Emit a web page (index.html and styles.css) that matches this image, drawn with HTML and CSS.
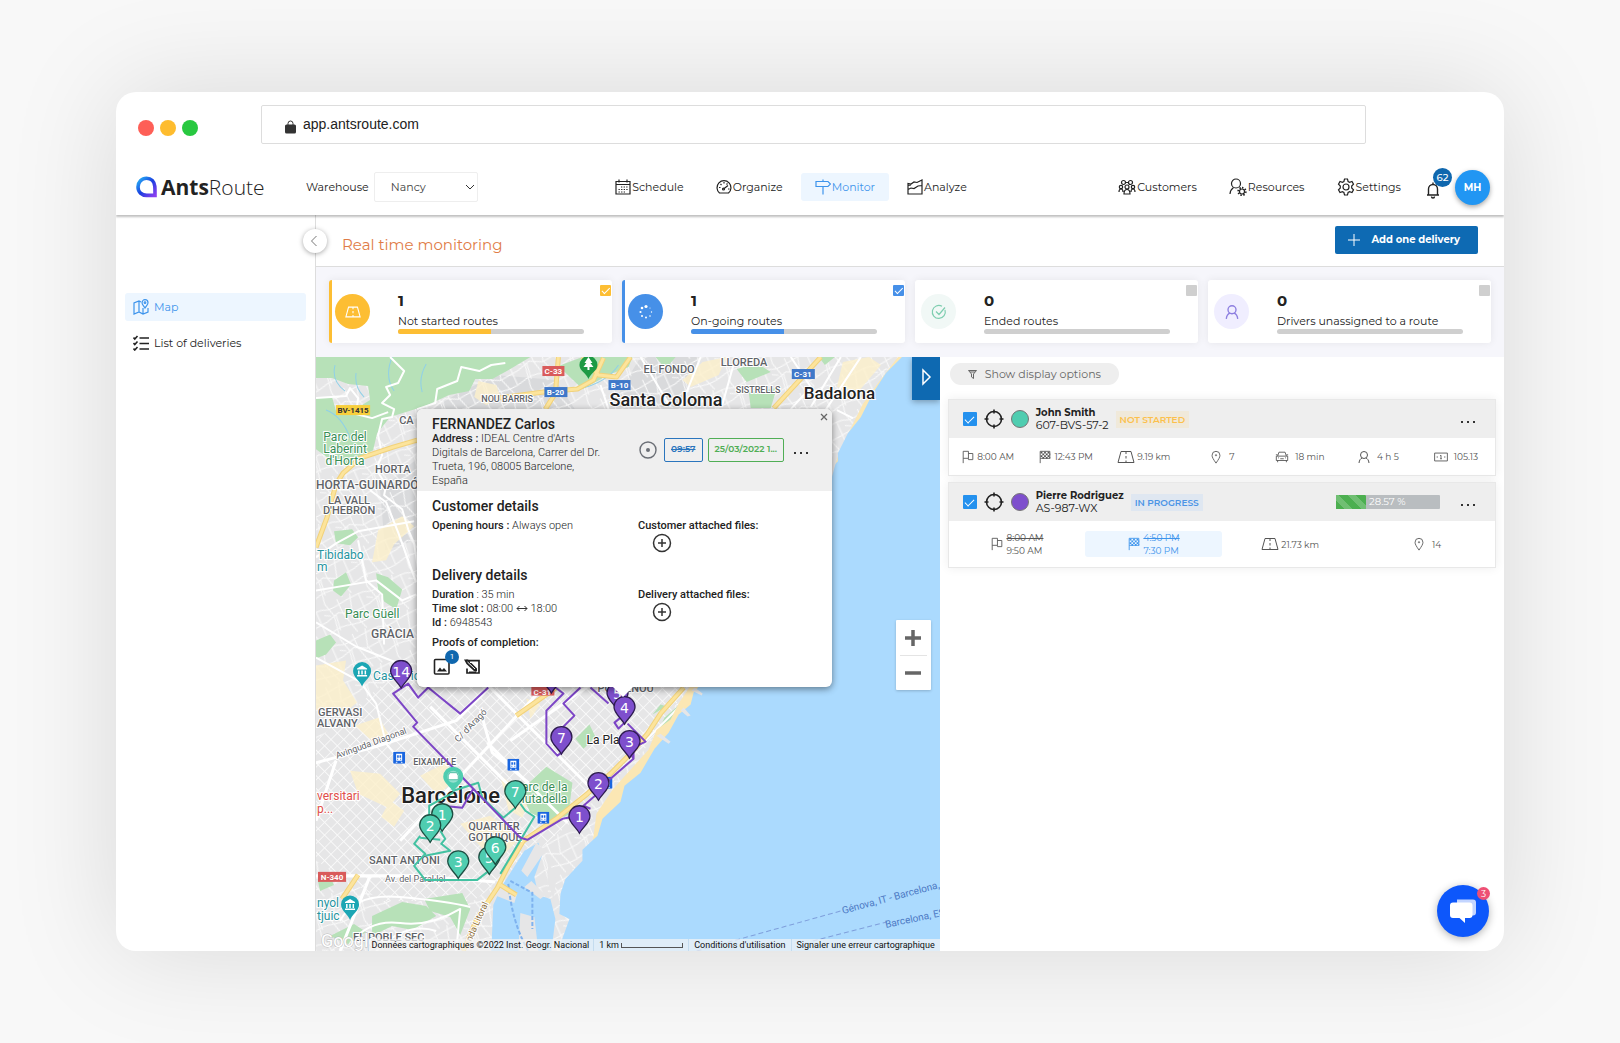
FILE: index.html
```html
<!DOCTYPE html>
<html lang="en">
<head>
  <meta charset="UTF-8">
  <meta name="viewport" content="width=device-width, initial-scale=1.0">
  <title>AntsRoute - Real time monitoring</title>
  <link rel="stylesheet" href="styles.css">
</head>
<body>

  <!-- Icons used more than once -->
  <svg class="sprite" aria-hidden="true">
    <symbol id="road" viewBox="0 0 18 14"><path d="M4 1.500h10l3 11H1zM9 1.500v2.500M9 6v2.500M9 10.500v2" /></symbol>
    <symbol id="flag" viewBox="0 0 14 16"><path d="M1.500 15V1.500h6v8h-6M7.500 4h5v7H7.500V9.500" /></symbol>
    <symbol id="finish" viewBox="0 0 14 16"><path d="M1.500 15V1.500h11v8h-11" /><path stroke-dasharray="2 2" stroke-width="2" d="M2 3h10M4 5h9M2 7h10M4 9h9" /></symbol>
    <symbol id="pin" viewBox="0 0 12 16"><path d="M6 15C3 10.500 1.500 8.500 1.500 6a4.500 4.500 0 0 1 9 0c0 2.500-1.500 4.500-4.500 9z" /><circle cx="6" cy="6" r=".7" /></symbol>
    <symbol id="person" viewBox="0 0 14 14"><circle cx="7" cy="5" r="3.500" /><path d="M2 13c.3-3 1.600-4.500 3.200-5M12 13c-.3-3-1.600-4.500-3.200-5" /></symbol>
    <symbol id="target" viewBox="0 0 20 20"><circle cx="10" cy="10" r="7.500" /><path d="M10 .5v4M10 15.500v4M.5 10h4M15.500 10h4" /></symbol>
    <symbol id="plus-circle" viewBox="0 0 20 20"><circle cx="10" cy="10" r="8.500" /><path d="M10 6v8M6 10h8" /></symbol>
    <symbol id="dots" viewBox="0 0 14 4"><path d="M0 1h2v2H0zM6 1h2v2H6zM12 1h2v2h-2z" /></symbol>
    <symbol id="marker" viewBox="0 0 24 30"><path d="M12 28.500C8.500 22 1.500 18 1.500 11.500a10.500 10.500 0 0 1 21 0C22.500 18 15.500 22 12 28.500z" /></symbol>
    <symbol id="train" viewBox="0 0 12 12"><rect width="12" height="12" rx="1" fill="#1a66e0" /><path fill="#fff" d="M3 2h6v7H3zM3 10h1.500L4 11H2.500zM9 10H7.500l.5 1h1.500z" /><path fill="#1a66e0" d="M4 3.500h1.600V6H4zM6.400 3.500H8V6H6.400zM4 7h1v1H4zM7 7h1v1H7z" /></symbol>
    <symbol id="museum" viewBox="0 0 20 26"><path fill="#1ba6b4" d="M10 25C8 19 1 16 1 9.500a9 9 0 0 1 18 0C19 16 12 19 10 25z" /><path fill="#fff" d="M10 4l5 3v1H5V7zM6 9h1.500v4H6zM9.200 9h1.500v4H9.200zM12.500 9H14v4h-1.500zM5 13.500h10V15H5z" /></symbol>
  </svg>

  <div class="window">
    <div class="browser-bar">
      <div class="lights"><span class="red"></span><span class="yellow"></span><span class="green"></span></div>
      <div class="url">
        <svg width="11" height="14" viewBox="0 0 11 14"><path d="M3 5V3.500a2.500 2.500 0 0 1 5 0V5" fill="none" stroke="#333" /><rect y="4.500" width="11" height="9" rx="1.500" fill="#333" /></svg>
        <span>app.antsroute.com</span>
      </div>
    </div>

    <header class="navbar">
      <div class="nav-left">
        <a class="logo" href="#">
          <svg width="22" height="22" viewBox="0 0 22 22">
            <defs><linearGradient id="logoFill" x1="0" y1="0" x2="1" y2="1"><stop offset="0" stop-color="#29b6f6" /><stop offset=".5" stop-color="#1a3fe0" /><stop offset="1" stop-color="#8a3ff0" /></linearGradient></defs>
            <path d="M10.500 2.200c4.800 0 7.800 3.300 8.300 8 .3 3 .2 6 .2 9.200h-8.300C5.700 19.400 2 16 2 11s3.700-8.800 8.500-8.800z" fill="none" stroke="url(#logoFill)" stroke-width="3.600" />
          </svg>
          <span><b>Ants</b>Route</span>
        </a>
        <label for="warehouse">Warehouse</label>
        <div class="select-box">
          <select id="warehouse"><option>Nancy</option></select>
          <svg width="10" height="6" viewBox="0 0 10 6"><path d="M1 1l4 4 4-4" /></svg>
        </div>
      </div>

      <nav class="nav-items">
        <a href="#">
          <svg class="icon" viewBox="0 0 16 16"><path d="M1 2.500h14V15H1zM1 5.500h14M4 .5v3M12 .5v3" /><path stroke-dasharray="1.300 1.300" d="M6 8h7M3.500 10.500H13M3.500 13H10" /></svg>
          Schedule
        </a>
        <a href="#">
          <svg class="icon" viewBox="0 0 16 16"><path d="M3.500 14A7 7 0 1 1 12.500 14zM7.500 10l4.500-3.500" /><circle cx="7.500" cy="10" r="1" /><path d="M8 3v1.500M3 8.500h1.500M4.500 5l1 1M11.500 4.500l-1 1M12 10h1.500" /></svg>
          Organize
        </a>
        <a href="#" class="active">
          <svg class="icon" viewBox="0 0 16 16"><path d="M1 2.500h12L15.500 5 13 7.500H1zM8 .5v2M8 7.500V15.500" /></svg>
          Monitor
        </a>
        <a href="#">
          <svg class="icon" viewBox="0 0 16 16"><path d="M1 15V4.500l3 .5 3-2 3 .5 5-2.500v14zM1 10.500l3-1.500 3 .5 4-2.500 4-.5M1 6.500l3-.5" /></svg>
          Analyze
        </a>
      </nav>

      <nav class="nav-items nav-right">
        <a href="#">
          <svg class="icon wide" viewBox="0 0 18 16"><circle cx="5.500" cy="3.500" r="2" /><circle cx="12.500" cy="3.500" r="2" /><circle cx="3" cy="8" r="1.700" /><circle cx="9" cy="8" r="2" /><circle cx="15" cy="8" r="1.700" /><path d="M1 13c0-2 .7-3 2-3s2 1 2 3M6 15c0-3 1-4.500 3-4.500s3 1.500 3 4.500zM13 13c0-2 .7-3 2-3s2 1 2 3M7.500 3.500h3" /></svg>
          Customers
        </a>
        <a href="#">
          <svg class="icon wide" viewBox="0 0 18 18"><circle cx="7" cy="5.500" r="4.500" /><path d="M1 16c.2-3 1.500-5 3.500-6.500" /><circle cx="13" cy="13.500" r="2.500" /><path stroke-width="1.800" stroke-dasharray="1.400 1.550" d="M13 9.700a3.800 3.800 0 1 1 0 7.600 3.800 3.800 0 1 1 0-7.600" /></svg>
          Resources
        </a>
        <a href="#">
          <svg class="icon wide" viewBox="0 0 18 18"><circle cx="9" cy="9" r="3" /><path d="M7.500 1h3l.6 2.500 1.500.8 2.400-.8 1.500 2.600-1.800 1.900v2l1.800 1.900-1.500 2.600-2.400-.8-1.500.8-.6 2.500h-3l-.6-2.500-1.500-.8-2.400.8-1.500-2.600L3.300 10V8L1.500 6.100 3 3.500l2.400.8 1.500-.8z" /></svg>
          Settings
        </a>
        <button class="bell" aria-label="Notifications">
          <svg width="14" height="18" viewBox="0 0 14 18"><path d="M1 14h12M2.500 14V8a4.500 4.500 0 0 1 9 0v6M5.500 15.500a1.500 1.500 0 0 0 3 0M7 1.500v2" /></svg>
          <span class="badge">62</span>
        </button>
        <button class="avatar">MH</button>
      </nav>
    </header>

    <div class="app">
      <aside class="sidebar">
        <button class="collapse" aria-label="Collapse menu"><svg width="8" height="12" viewBox="0 0 8 12"><path d="M6.500 1l-5 5 5 5" /></svg></button>
        <a href="#" class="active">
          <svg class="icon" viewBox="0 0 16 16"><path d="M8 3L6 2 1 4v11l5-2 4 2 5-2V9M6 2v11M10 9v6" /><path d="M12 9C10.500 6.500 9 5.500 9 3.700a3 3 0 0 1 6 0C15 5.500 13.500 6.500 12 9z" /><circle cx="12" cy="3.700" r=".8" /></svg>
          Map
        </a>
        <a href="#">
          <svg class="icon" viewBox="0 0 16 16"><path stroke-width="1.600" d="M6.500 3H16M6.500 8.500H16M6.500 14H16M.5 2.500l1.300 1.500L4.500 1M.5 8l1.300 1.500 2.700-3M.5 13.500L1.800 15l2.700-3" /></svg>
          List of deliveries
        </a>
      </aside>

      <main class="content">
        <div class="title-bar">
          <h1>Real time monitoring</h1>
          <button class="add-btn"><svg width="14" height="14" viewBox="0 0 14 14"><path d="M7 1v12M1 7h12" /></svg>Add one delivery</button>
        </div>

        <section class="stats">
          <div class="stat not-started">
            <span class="circle"><svg class="icon"><use href="#road" /></svg></span>
            <div class="info"><strong>1</strong><label for="s1">Not started routes</label><div class="bar"><div style="width: 50%"></div></div></div>
            <input type="checkbox" id="s1" checked>
          </div>
          <div class="stat on-going">
            <span class="circle"><svg class="icon" viewBox="0 0 16 16"><g fill="#fff" stroke="none"><circle cx="8" cy="2.500" r="1.600" /><circle cx="4" cy="4" r="1.300" /><circle cx="2.500" cy="8" r="1.100" /><circle cx="4" cy="12" r="1" /><circle cx="8" cy="13.500" r="1" /><circle cx="12" cy="12" r=".8" /><circle cx="13.500" cy="8" r=".7" /><circle cx="12" cy="4" r=".5" /></g></svg></span>
            <div class="info"><strong>1</strong><label for="s2">On-going routes</label><div class="bar"><div style="width: 50%"></div></div></div>
            <input type="checkbox" id="s2" checked>
          </div>
          <div class="stat ended">
            <span class="circle"><svg class="icon" viewBox="0 0 16 16"><path d="M14 6a6.500 6.500 0 1 1-3-3.700M5 7.500l3 3 6-7" /></svg></span>
            <div class="info"><strong>0</strong><label for="s3">Ended routes</label><div class="bar"></div></div>
            <input type="checkbox" id="s3">
          </div>
          <div class="stat unassigned">
            <span class="circle"><svg class="icon"><use href="#person" /></svg></span>
            <div class="info"><strong>0</strong><label for="s4">Drivers unassigned to a route</label><div class="bar"></div></div>
            <input type="checkbox" id="s4">
          </div>
        </section>

        <div class="board">
          <section class="map">
            <svg class="map-canvas" viewBox="316 357 624 593" preserveAspectRatio="xMinYMin slice">
              <defs>
                <pattern id="blocks" width="9" height="9" patternUnits="userSpaceOnUse" patternTransform="rotate(45)"><path d="M0 0h9M0 0v9" stroke="#fafafa" stroke-width="1.600" /></pattern>
                <pattern id="suburb" width="46" height="38" patternUnits="userSpaceOnUse" patternTransform="rotate(-24)"><path d="M0 4c12 6 20-2 46 0M0 17l14-4 12 6 20-2M0 29c16-6 26 6 46 0M5 0l4 14-4 24M18 0v15l6 23M32 0l-5 18 7 20M40 3v27M11 14l-2 16M0 10l6 3" fill="none" stroke="#fafafa" stroke-width="1" /></pattern>
              </defs>

              <rect x="316" y="357" width="660" height="640" fill="#e6e6e7" />
              <path fill="#d9dadc" d="M455 395l40-20 60 5 20 30H430zM640 357h60l-20 50h-70zM380 490l35-30v80l-30 10z" />
              <rect x="316" y="357" width="660" height="640" fill="url(#suburb)" />
              <path fill="#e6e6e7" d="M316 740l77-65 90-25h230l-70 100-70 70-60 50-40 30h-90l-67-40z" />
              <path fill="url(#blocks)" d="M316 740l77-65 90-25h230l-70 100-70 70-60 50-40 30h-90l-67-40z" />

              <!-- Built-up areas -->
              <path fill="#fdf0cb" fill-opacity=".8" d="M478 381l18 4 4 12-14 8-12-8zM378 530l24-14 12 10-20 18-8 16-14 2zM682 380l20-18 24-5-8 18-28 12zM842 362l26-5 12 8-22 26-22-4zM316 665l30-5-3 20 14 22-15 12-26-5zM355 725l24-8 9 16-14 9zM350 770l30 3 20 20-12 14-30-14zM420 775l24-12 14 12-20 20zM500 775l30 20-8 22-14-8zM526 698l14 6-10 14zM460 823l30-8 30 22-25 25-20-22zM390 800l14 10-10 16-13-10z" />

              <!-- Parks -->
              <g fill="#b7e1b8">
                <path d="M316 357h214l-20 12-18 10-17 0-6 12-20 4-24 11-35 11-13 16-4 17-15 7-12 6-16-4-14-10v-52l16 0 4 14 12-6 6 5 16-10-2-14-20-2-16-6h-16z" />
                <path d="M334 531l18-2 6 8-8 8-14-2zM334 580l12-8 5 12-10 12-8-6zM376 573l12 4 14 12-6 20-12-8-6-12zM316 640l14-6 6 8-10 12-10 4zM558 366l24-9h50l-4 10-20 8-26 14zM655 357h20l-10 12zM736 369l20-6 14 9-24 10zM748 392l28-4-6 20h-20zM818 357h16l-10 8zM520 790l26-24 26 16-4 32-16 8-22-10zM575 738l14-14 6 12-12 12zM664 717l14-12-4 20-22 18zM652 714l8-10 6 2z" />
                <path d="M372 915l30-14 24 4 10 10-24 14-20-4-20 10zM424 898l38-6 8 16-10 26-10-18-20-6zM318 880l12-4 4 8-14 6zM330 935l24-12 12 8-18 12zM530 888l8 4-2 6z" />
              </g>
              <path d="M335 365q-4 16 10 26M392 357q-8 20 2 34M326 410q16 6 24 28M426 364q-8 14-4 28M364 397q-10-10-8-24M618 365q-12 18-40 24" fill="none" stroke="#8fd0e8" stroke-width="1" />

              <!-- Streets -->
              <g fill="none" stroke="#fff" stroke-width="2" stroke-linejoin="round">
                <path d="M390 357l14 14-6 12-12 4 4 8-8 8 12 6-2 8-10 2-4 16 4 20-6 14 10 16-2 10 18 14 6 20 6 14 6 40M316 398l30-2 4-8 8 10-2 16 16 4 16-6M417 409l18-6 2-14 20-8 4-14 18 4 12-6 14-2" />
                <path d="M316 557l20-14 22-12 56-10M316 622l40 24 40 16 30 26M316 657l44 24 16 22 10 40 20 24M316 590l60-10 26 20 14-6M370 490l16 12 12 30 18 50M358 540l8 40 16 14 2 50" />
                <path d="M316 762l60-16 80-26 60-60M336 760l-20 60M400 840l140-150M430 706l96 96M480 710l12 42 36 30M487 742l80 80M316 875h100l80 6M340 950l20-50 10-25M490 687l100 100M510 740l80-56" stroke-width="3" />
                <path d="M340 920q14-28 60-24t70 10M350 942q20-24 50-20t60-14l-4 42M376 950q30-30 60-20M640 357l30 50M700 357l-20 50M735 357l-14 50M790 357l20 30-20 22M840 357l-30 50M600 385l8 24M860 357l-40 60M836 410l16 8" />
                <path d="M590 687l44-34M640 745l58-58" />
              </g>

              <!-- Sea -->
              <path fill="#fbe7b4" d="M940 357h-43l-19 25-16 22-20 40-8 20-30 60-110 155-16 24-8 16-14 10-8 20-36 40-16 24-4 30-10 30z" />
              <path fill="#abdafe" d="M940 357h-39l-16 16-13 20-12 24-13 16-10 20v8l-5 5-40 80-92 138-7 8-3 12-12 10-10 18-14 16-14 24-16 13-4 16-18 17-5 17-15 14v11l-17 18-5 15-1 20 10 5-9 25v42h385z" />
              <path fill="#abdafe" d="M524 850l14-8 4 12-8 22 4 18 12 4 5 20-4 32h-60l2-46 8-18z" />
              <path fill="#e6e6e7" d="M495 880l22 12-3 10-20-8zM536 842l-15 28 6 6 18-26zM524 886l16 12 5-4-14-14zM520 912l14 4 4 34h-20zM548 860l8 18-3 20-6-18zM694 687l8 6-1 2-10-5zM683 707l7 8-3 1-7-6zM660 733l10 8-2 2-12-8zM837 455l-6 22h-2l3-24z" />
              <path d="M508 883q4 40 20 67M510 880l22 12 0 36" fill="none" stroke="#7eb2ef" stroke-width="2" stroke-dasharray="4 2" />
              <path d="M696 950l144-40M812 940l74-19" stroke="#7f9fdc" stroke-width="1" stroke-dasharray="5 3" />

              <!-- Main roads -->
              <g fill="none" stroke="#f2d27a" stroke-width="5" stroke-linejoin="round">
                <path d="M316 547l11-30 9-33 7-11 17-15 33-11 24-7M558 357l-3 36-10 16M497 398l46-6 34-3 16-9 10-22M582 357l16 18 18 2 14-20M820 357l-47 51M683 687l-23 26-13 20-17 20-20 20-23 20-30 24-34 23-16 27-10 20-20 30-14 33" />
                <path d="M556 687l-40 28M342 898l16-24M500 884l16 10" />
              </g>
              <g fill="none" stroke="#fce49c" stroke-width="3" stroke-linejoin="round">
                <path d="M316 547l11-30 9-33 7-11 17-15 33-11 24-7M558 357l-3 36-10 16M497 398l46-6 34-3 16-9 10-22M582 357l16 18 18 2 14-20M820 357l-47 51M683 687l-23 26-13 20-17 20-20 20-23 20-30 24-34 23-16 27-10 20-20 30-14 33" />
                <path d="M556 687l-40 28M342 898l16-24M500 884l16 10" />
              </g>

              <!-- Place names -->
              <g class="place">
                <text x="481" y="402" class="s">NOU BARRIS</text>
                <text x="643" y="373">EL FONDO</text>
                <text x="720" y="366">LLOREDA</text>
                <text x="735" y="393" class="s">SISTRELLS</text>
                <text x="399" y="424">CA</text>
                <text x="375" y="473">HORTA</text>
                <text x="316" y="489" class="m">HORTA-GUINARDÓ</text>
                <text x="349" y="504" text-anchor="middle">LA VALL</text>
                <text x="349" y="514" text-anchor="middle">D'HEBRON</text>
                <text x="371" y="638" class="m">GRÀCIA</text>
                <text x="318" y="715">GERVASI</text>
                <text x="317" y="726">ALVANY</text>
                <text x="413" y="764" class="s">EIXAMPLE</text>
                <text x="468" y="829">QUARTIER</text>
                <text x="468" y="840">GOTHIQUE</text>
                <text x="369" y="863">SANT ANTONI</text>
                <text x="353" y="940">EL POBLE SEC</text>
                <text x="597" y="691">POBLENOU</text>
                <text x="385" y="881" class="street">Av. del Paral·lel</text>
                <text x="0" y="0" class="street" transform="translate(337 758) rotate(-20)">Avinguda Diagonal</text>
                <text x="0" y="0" class="street" transform="translate(458 742) rotate(-46)">C/ d'Aragó</text>
                <text x="0" y="0" class="street road-name" transform="translate(471 941) rotate(-66)">nda Litoral</text>
              </g>
              <g class="city">
                <text x="609" y="406">Santa Coloma</text>
                <text x="803" y="399" class="c2">Badalona</text>
                <text x="401" y="802" class="c1">Barcelone</text>
                <text x="586" y="743" class="c3">La Plata</text>
              </g>
              <g class="poi-park">
                <text x="345" y="441" text-anchor="middle">Parc del</text>
                <text x="345" y="453" text-anchor="middle">Laberint</text>
                <text x="345" y="465" text-anchor="middle">d'Horta</text>
                <text x="345" y="618">Parc Güell</text>
                <text x="567" y="790" text-anchor="end">Parc de la</text>
                <text x="567" y="802" text-anchor="end">Ciutadella</text>
              </g>
              <g class="poi-sight">
                <text x="317" y="559">Tibidabo</text>
                <text x="317" y="571">m</text>
                <text x="373" y="679">Casa Vic</text>
                <text x="317" y="906">nyol</text>
                <text x="317" y="919">tjuic</text>
              </g>
              <g class="poi-hospital">
                <text x="317" y="799">versitari</text>
                <text x="317" y="812">p...</text>
              </g>
              <g class="ferry">
                <text x="0" y="0" transform="translate(842 913) rotate(-15)">Génova, IT - Barcelona, ES</text>
                <text x="0" y="0" transform="translate(885 927) rotate(-12)">Barcelona, ES</text>
              </g>
              <g class="shield">
                <rect x="542" y="366" width="22" height="10" fill="#d95b5b" /><text x="553" y="374">C-33</text>
                <rect x="544" y="387" width="23" height="10" fill="#3f78c9" /><text x="555" y="395">B-20</text>
                <rect x="608" y="380" width="22" height="10" fill="#3f78c9" /><text x="619" y="388">B-10</text>
                <rect x="791" y="369" width="23" height="10" fill="#3f78c9" /><text x="802" y="377">C-31</text>
                <rect x="531" y="686" width="23" height="9" fill="#d95b5b" /><text x="542" y="694">C-31</text>
                <rect x="318" y="871" width="28" height="10" fill="#d95b5b" /><text x="332" y="879">N-340</text>
                <rect x="336" y="405" width="34" height="10" fill="#f8cf3c" /><text x="353" y="413" class="dark">BV-1415</text>
              </g>

              <use href="#train" x="393" y="751" width="12" height="12" />
              <use href="#train" x="507" y="758" width="12" height="12" />
              <use href="#train" x="537" y="811" width="12" height="12" />
              <use href="#train" x="600" y="776" width="12" height="12" />
              <use href="#museum" x="352" y="661" width="20" height="26" />
              <use href="#museum" x="340" y="894" width="20" height="26" />
              <path fill="#1e9a45" d="M588 379c-2-6-9-8-9-14a9 9 0 0 1 18 0c0 6-7 8-9 14z" />
              <path fill="#fff" d="M588 357l4 6h-2l3 4h-4v3h-2v-3h-4l3-4h-2z" />

              <!-- Routes -->
              <g fill="none" stroke-width="2" stroke-linejoin="round">
                <path class="route-green" d="M453 790l25-8 4 15 21 20 12-10M453 792l-24 13v12M520 803l5 7 9 6-34 57M495 865l-18 14h-52l-11-14 11-12-11-10 6-8M440 830l5 8-4 5 9 7-25 5M420 837l20 2" />
                <path class="route-purple" d="M579 815l-17 3-35 21-7-2-47-49-20-21-40-41 4-4-24-29 15-10 10 14 10-10 32 26 28-26M473 788l-11 19-20-2M555 687l8 6-17 17v33l11 12 4-3M561 728l13-13-11-12 17-16M590 687l18 16M630 753l3 5-23 20-12 14-15 13 7 3M579 823l4-18M624 722l-6 6-4-6 6-5M627 723l18 18-12 6 0 11" />
              </g>
              <g class="markers">
                <use href="#marker" class="purple" x="389" y="659" width="24" height="30" /><text x="401" y="676">14</text>
                <use href="#marker" class="purple" x="539" y="664" width="24" height="30" />
                <use href="#marker" class="purple" x="549" y="725" width="24" height="30" /><text x="561" y="742">7</text>
                <use href="#marker" class="purple" x="605" y="681" width="24" height="30" /><text x="617" y="698">5</text>
                <use href="#marker" class="purple" x="612" y="695" width="24" height="30" /><text x="624" y="712">4</text>
                <use href="#marker" class="purple" x="617" y="729" width="24" height="30" /><text x="629" y="746">3</text>
                <use href="#marker" class="purple" x="586" y="771" width="24" height="30" /><text x="598" y="788">2</text>
                <use href="#marker" class="purple" x="567" y="804" width="24" height="30" /><text x="579" y="821">1</text>
                <use href="#marker" class="green" x="503" y="779" width="24" height="30" /><text x="515" y="796">7</text>
                <use href="#marker" class="green" x="430" y="802" width="24" height="30" /><text x="442" y="819">1</text>
                <use href="#marker" class="green" x="418" y="813" width="24" height="30" /><text x="430" y="830">2</text>
                <use href="#marker" class="green" x="446" y="849" width="24" height="30" /><text x="458" y="866">3</text>
                <use href="#marker" class="green" x="477" y="845" width="24" height="30" /><text x="489" y="862">5</text>
                <use href="#marker" class="green" x="483" y="835" width="24" height="30" /><text x="495" y="852">6</text>
                <path fill="#4fcdb0" d="M453 792c-2-6-10-10-10-16a10 10 0 0 1 20 0c0 6-8 10-10 16z" />
                <circle cx="453" cy="776" r="6" fill="#fff" fill-opacity=".4" />
                <path fill="#fff" stroke="#3bb397" stroke-width=".8" d="M448 775l1.500-3h7l1.500 3v4h-10z" />
              </g>
              <text x="321" y="946" class="google">Google</text>
            </svg>

            <article class="popup">
              <button class="close" aria-label="Close"><svg width="8" height="8" viewBox="0 0 8 8"><path d="M1 1l6 6M7 1L1 7" /></svg></button>
              <header>
                <div class="who">
                  <h2>FERNANDEZ Carlos</h2>
                  <p><b>Address :</b> IDEAL Centre d'Arts Digitals de Barcelona, Carrer del Dr. Trueta, 196, 08005 Barcelone, España</p>
                </div>
                <div class="when">
                  <svg width="18" height="18" viewBox="0 0 18 18"><circle cx="9" cy="9" r="8" fill="none" stroke="#6b6f76" stroke-width="1.400" /><circle cx="9" cy="9" r="2" fill="#6b6f76" /></svg>
                  <span class="time"><s>09:57</s></span>
                  <span class="date">25/03/2022 1...</span>
                  <button class="more" aria-label="More"><svg width="14" height="4"><use href="#dots" /></svg></button>
                </div>
              </header>
              <div class="details">
                <h2>Customer details</h2>
                <div class="cols">
                  <p><b>Opening hours :</b> Always open</p>
                  <div><b>Customer attached files:</b><button class="attach" aria-label="Add customer file"><svg width="20" height="20"><use href="#plus-circle" /></svg></button></div>
                </div>
                <h2>Delivery details</h2>
                <div class="cols">
                  <p><b>Duration</b> : 35 min<br><b>Time slot :</b> 08:00 <svg class="arrows" width="12" height="7" viewBox="0 0 12 7"><path d="M1 3.500h10M3.500 1L1 3.500 3.500 6M8.500 1L11 3.500 8.500 6" /></svg> 18:00<br><b>Id :</b> 6948543</p>
                  <div><b>Delivery attached files:</b><button class="attach" aria-label="Add delivery file"><svg width="20" height="20"><use href="#plus-circle" /></svg></button></div>
                </div>
                <p><b>Proofs of completion:</b></p>
                <div class="proof-icons">
                  <button aria-label="Photos">
                    <svg width="18" height="18" viewBox="0 0 18 18"><rect x="1.500" y="1.500" width="14.500" height="14.500" rx="1" fill="none" stroke="#222" stroke-width="1.600" /><path fill="#222" d="M4 13.500l3-4 2 2.500 2-2 3 3.500z" /></svg>
                    <span class="count">1</span>
                  </button>
                  <button aria-label="Signature">
                    <svg width="18" height="18" viewBox="0 0 18 18"><path d="M3 2.700h13V15H4v-4.500" fill="none" stroke="#222" stroke-width="1.700" /><path d="M1 1.500h4l9 9v3l-3-.5-7.500-7zM6 13.500h7v1.500H6z" fill="#222" /><path d="M4.500 4l7.500 7M7 4.500h6.500v4" fill="none" stroke="#fff" /></svg>
                  </button>
                </div>
              </div>
            </article>

            <button class="expand" aria-label="Expand map"><svg width="12" height="18" viewBox="0 0 12 18"><path d="M3 2v14l7-7z" /></svg></button>
            <div class="zoom">
              <button aria-label="Zoom in"><svg width="16" height="16" viewBox="0 0 16 16"><path d="M8 0v16M0 8h16" /></svg></button>
              <button aria-label="Zoom out"><svg width="16" height="16" viewBox="0 0 16 16"><path d="M0 8h16" /></svg></button>
            </div>
            <div class="legal">
              <span>Données cartographiques ©2022 Inst. Geogr. Nacional</span>
              <span class="scale">1 km <i></i></span>
              <a href="#">Conditions d'utilisation</a>
              <a href="#">Signaler une erreur cartographique</a>
            </div>
          </section>

          <section class="routes">
            <button class="filter"><svg width="9" height="9" viewBox="0 0 9 9"><path d="M.5.500h8L5.500 4v4.500L3.500 7V4zM2 2h5" /></svg>Show display options</button>

            <article class="route">
              <header>
                <input type="checkbox" id="r1" checked>
                <svg class="aim" width="20" height="20"><use href="#target" /></svg>
                <span class="dot teal"></span>
                <label for="r1"><b>John Smith</b><br>607-BVS-57-2</label>
                <span class="status waiting">NOT STARTED</span>
                <button class="more" aria-label="More"><svg width="14" height="4"><use href="#dots" /></svg></button>
              </header>
              <div class="figures">
                <span><svg class="icon"><use href="#flag" /></svg>8:00 AM</span>
                <span><svg class="icon"><use href="#finish" /></svg>12:43 PM</span>
                <span><svg class="icon road"><use href="#road" /></svg>9.19 km</span>
                <span class="spaced"><svg class="icon"><use href="#pin" /></svg>7</span>
                <span class="spaced"><svg class="icon" viewBox="0 0 16 14"><path d="M3 6l1.500-4.500h7L13 6M1.500 6h13v5h-13zM3 11v2M13 11v2M1 4.500h2M13 4.500h2M6 9h4M3.500 8h1M11.500 8h1" /></svg>18 min</span>
                <span class="spaced"><svg class="icon"><use href="#person" /></svg>4 h 5</span>
                <span class="spaced"><svg class="icon" viewBox="0 0 16 12"><path d="M.7 1.500h14.600v9H.7zM7 4.500l1-.5v4M7 8h2M3 6h1.500M11.500 6H13" /></svg>105.13</span>
              </div>
            </article>

            <article class="route">
              <header>
                <input type="checkbox" id="r2" checked>
                <svg class="aim" width="20" height="20"><use href="#target" /></svg>
                <span class="dot violet"></span>
                <label for="r2"><b>Pierre Rodriguez</b><br>AS-987-WX</label>
                <span class="status running">IN PROGRESS</span>
                <div class="progress"><div style="width: 28.57%"></div><span>28.57 %</span></div>
                <button class="more" aria-label="More"><svg width="14" height="4"><use href="#dots" /></svg></button>
              </header>
              <div class="figures four">
                <span><svg class="icon"><use href="#flag" /></svg><span><s>8:00 AM</s><br>9:50 AM</span></span>
                <span class="late"><svg class="icon"><use href="#finish" /></svg><span><s>4:50 PM</s><br>7:30 PM</span></span>
                <span><svg class="icon road"><use href="#road" /></svg>21.73 km</span>
                <span class="spaced"><svg class="icon"><use href="#pin" /></svg>14</span>
              </div>
            </article>
          </section>
        </div>
      </main>
    </div>

    <button class="chat" aria-label="Open chat">
      <svg width="28" height="26" viewBox="0 0 28 26"><path fill="#c3d5ff" d="M8 1.500h16a3 3 0 0 1 3 3v10a3 3 0 0 1-3 3H8z" /><path fill="#fff" d="M4 4.500h16.500a3 3 0 0 1 3 3v9.500a3 3 0 0 1-3 3H16V25l-5.500-5H4a3 3 0 0 1-3-3V7.500a3 3 0 0 1 3-3z" /></svg>
      <span>3</span>
    </button>
  </div>

</body>
</html>
```
FILE: styles.css
```css
* {
  box-sizing: border-box;
}

body {
  font-family: Montserrat, Inter, sans-serif;
  font-size: 11px;
  color: #222;
  margin: 0;
  padding: 92px 116px;
  background-color: #f8f8f8;
  min-height: 100vh;
  display: flex;
}

a {
  color: inherit;
  text-decoration: none;
}

button {
  font-family: inherit;
  padding: 0;
  border: none;
  background: none;
  color: inherit;
  cursor: pointer;
}

h1, h2, p {
  margin: 0;
}

svg {
  flex: none;
}

.sprite {
  position: absolute;
  width: 0;
  height: 0;
}

.icon {
  width: 16px;
  height: 16px;
  fill: none;
  stroke: currentColor;
  stroke-width: 1.2;
}

.icon.wide {
  width: 18px;
  height: 18px;
}

.window {
  position: relative;
  flex: 1;
  display: flex;
  flex-direction: column;
  background: white;
  border-radius: 20px;
  box-shadow: 0 0 110px rgba(0, 0, 0, 0.13);
  overflow: clip;
}

/* Browser bar */
.browser-bar {
  display: flex;
  align-items: center;
  padding: 13px 138px 0 22px;
}

.lights {
  display: flex;
  gap: 6px;
  width: 123px;
  padding-top: 6px;
}

.lights span {
  width: 16px;
  height: 16px;
  border-radius: 50%;
}

.lights .red { background: #fe5f57; }
.lights .yellow { background: #febc2e; }
.lights .green { background: #28c840; }

.url {
  flex: 1;
  display: flex;
  align-items: center;
  gap: 7px;
  height: 39px;
  padding: 0 0 2px 23px;
  border: 1px solid #ddd;
  border-radius: 2px;
  font-family: "Liberation Sans", Arial, sans-serif;
  font-size: 14px;
}

.url svg {
  margin-top: 6px;
}

/* Navbar */
.navbar {
  position: relative;
  z-index: 1;
  display: flex;
  align-items: center;
  justify-content: space-between;
  height: 71px;
  padding: 15px 14px 0 20px;
  box-shadow: 0 2px 2px rgba(0, 0, 0, 0.25);
}

.nav-left {
  display: flex;
  align-items: center;
}

.logo {
  display: flex;
  align-items: center;
  gap: 3px;
  width: 170px;
  font-family: "Open Sans", sans-serif;
  font-size: 21px;
  font-weight: 300;
}

.logo b {
  font-weight: 700;
}

.select-box {
  position: relative;
  margin-left: 5px;
}

.select-box select {
  appearance: none;
  width: 104px;
  height: 30px;
  padding: 0 16px;
  border: 1px solid #eee;
  border-radius: 2px;
  background: white;
  font: inherit;
  color: #444;
}

.select-box svg {
  position: absolute;
  right: 3px;
  top: 12px;
  fill: none;
  stroke: #333;
}

.nav-items {
  display: flex;
  align-items: center;
  gap: 4px;
}

.nav-items a {
  display: flex;
  align-items: center;
  gap: 1px;
  height: 28px;
  padding: 0 14px;
  border-radius: 3px;
}

.active {
  background: #edf6ff;
  color: #3d94ec;
}

.bell {
  position: relative;
  width: 28px;
  height: 28px;
  margin-right: 4px;
}

.bell svg {
  display: block;
  margin: 6px 7px 0;
  fill: none;
  stroke: #222;
  stroke-width: 1.4;
}

.badge {
  position: absolute;
  left: 14px;
  top: -5px;
  width: 19px;
  height: 19px;
  border-radius: 50%;
  background: #0f67ae;
  color: white;
  font-size: 10px;
  font-weight: 500;
  line-height: 19px;
}

.avatar {
  width: 35px;
  height: 35px;
  border-radius: 50%;
  background: #2196f3;
  color: white;
  font-size: 10px;
  font-weight: bold;
  box-shadow: 0 2px 5px rgba(0, 0, 0, 0.35);
}

/* Sidebar */
.app {
  flex: 1;
  display: flex;
}

.sidebar {
  position: relative;
  width: 200px;
  padding: 78px 9px 0;
  border-right: 1px solid #ddd;
}

.sidebar a {
  display: flex;
  align-items: center;
  gap: 5px;
  height: 28px;
  margin-bottom: 8px;
  padding-left: 8px;
  border-radius: 3px;
}

.collapse {
  position: absolute;
  right: -12px;
  top: 14px;
  width: 24px;
  height: 24px;
  border-radius: 50%;
  background: white;
  box-shadow: 0 1px 5px rgba(0, 0, 0, 0.35);
}

.collapse svg {
  display: block;
  margin: 6px 7px;
  fill: none;
  stroke: #777;
}

.content {
  flex: 1;
  display: flex;
  flex-direction: column;
  min-width: 0;
}

.title-bar {
  display: flex;
  align-items: center;
  justify-content: space-between;
  height: 52px;
  padding: 0 26px 2px;
  border-bottom: 1px solid #ddd;
}

.title-bar h1 {
  padding-top: 9px;
  font-size: 15px;
  font-weight: normal;
  color: #df7c47;
}

.add-btn {
  display: flex;
  align-items: center;
  gap: 10px;
  height: 28px;
  padding: 0 18px 0 12px;
  border-radius: 2px;
  background: #0e6ab3;
  color: white;
  font-size: 10px;
  font-weight: bold;
}

.add-btn svg {
  stroke: white;
}

/* Stat cards */
.stats {
  display: grid;
  grid-template-columns: repeat(4, 1fr);
  gap: 10px;
  padding: 13px 13px 14px;
  background: #f6f6fb;
}

.stat {
  display: flex;
  height: 63px;
  padding: 0 1px 0 6px;
  border-radius: 3px;
  background: white;
  box-shadow: 0 0 8px rgba(0, 0, 0, 0.07);
}

.stat .circle {
  display: flex;
  align-items: center;
  justify-content: center;
  width: 35px;
  height: 35px;
  margin: 14px 28px 0 0;
  border-radius: 50%;
}

.stat .info {
  flex: 1;
  padding-top: 11px;
}

.stat strong,
.stat label {
  display: block;
  line-height: 20px;
}

.stat strong {
  font-size: 15px;
}

.bar {
  height: 5px;
  margin-top: -2px;
  border-radius: 3px;
  background: #cfcfcf;
  overflow: hidden;
}

.bar div {
  height: 100%;
}

input[type="checkbox"] {
  appearance: none;
  flex: none;
  width: 11px;
  height: 11px;
  margin: 0;
  border-radius: 1px;
  background: #cfcfcf;
}

input[type="checkbox"]:checked::before {
  content: "";
  display: block;
  width: 60%;
  height: 30%;
  margin: 25% 20%;
  border-left: 1px solid white;
  border-bottom: 1px solid white;
  transform: rotate(-45deg);
}

.stat input[type="checkbox"] {
  margin: 5px 0 0 16px;
}

.not-started,
.on-going {
  border-left: 3px solid;
  padding-left: 3px;
}

.not-started { border-color: #fdbe33; }
.not-started .circle { background: #fdbe33; color: white; }
.not-started .bar div,
.not-started input[type="checkbox"] { background: #fdbe33; }
.on-going { border-color: #4690e8; }
.on-going .circle { background: #4690e8; }
.on-going .bar div,
.on-going input[type="checkbox"] { background: #4690e8; }
.ended .circle { background: #f1f8f6; color: #7fceb0; }
.unassigned .circle { background: #f0eeff; color: #8d7fe0; }

/* Map */
.board {
  flex: 1;
  display: grid;
  grid-template-columns: 21fr 19fr;
}

.map {
  position: relative;
  min-height: 592px;
  overflow: hidden;
}

.map-canvas {
  position: absolute;
  width: 100%;
  height: 100%;
  font-family: Roboto, sans-serif;
}

.place text {
  font-size: 11px;
  font-weight: 500;
  fill: #5f6368;
  stroke: white;
  stroke-width: 2px;
  paint-order: stroke;
}

.place .s { font-size: 9px; }
.place .m { font-size: 12px; }

.place .street {
  font-size: 9px;
  font-weight: normal;
}

.place .road-name {
  fill: #8a6a35;
}

.city text {
  font-size: 18px;
  font-weight: 500;
  fill: #222;
  stroke: white;
  stroke-width: 2px;
  paint-order: stroke;
}

.city .c1 { font-size: 22px; }
.city .c2 { font-size: 17px; }
.city .c3 { font-size: 12px; font-weight: normal; }

.poi-park text,
.poi-sight text,
.poi-hospital text {
  font-size: 12px;
  stroke: white;
  stroke-width: 2px;
  paint-order: stroke;
}

.poi-park text { fill: #388e55; }
.poi-sight text { fill: #2694a0; }
.poi-hospital text { fill: #e04f4a; }

.ferry text {
  font-size: 10px;
  fill: #4b79c4;
}

.shield text {
  font-size: 8px;
  font-weight: bold;
  fill: white;
  text-anchor: middle;
}

.shield .dark {
  fill: #333;
}

.route-green { stroke: #43c2a2; }
.route-purple { stroke: #7c45c6; }

.markers .purple { fill: #7e4fcd; stroke: #2e1c50; stroke-width: 1.3px; }
.markers .green { fill: #4fcdb0; stroke: #1e4f43; stroke-width: 1.3px; }

.markers text {
  font-family: "DejaVu Sans", sans-serif;
  font-size: 14px;
  fill: white;
  text-anchor: middle;
}

.google {
  font-size: 18px;
  fill: white;
  stroke: #bbb;
  stroke-width: 1px;
  paint-order: stroke;
}

.popup {
  position: absolute;
  left: 101px;
  top: 52px;
  width: 415px;
  border-radius: 6px;
  background: white;
  box-shadow: 0 2px 7px rgba(0, 0, 0, 0.45);
  font-family: Roboto, sans-serif;
  font-size: 11px;
  font-weight: 300;
  line-height: 14px;
}

.popup::after {
  content: "";
  position: absolute;
  left: 196px;
  top: 100%;
  border: 10px solid transparent;
  border-top-color: white;
}

.popup b {
  font-weight: 500;
}

.popup h2 {
  font-size: 14px;
  font-weight: 500;
  line-height: 16px;
}

.popup header {
  display: flex;
  height: 82px;
  padding: 7px 24px 0 15px;
  border-radius: 6px 6px 0 0;
  background: #efefef;
}

.popup .who {
  width: 207px;
  padding-right: 28px;
}

.when {
  flex: 1;
  display: flex;
  align-items: center;
  align-self: flex-start;
  gap: 5px;
  margin-top: 22px;
  font-family: Montserrat, Inter, sans-serif;
  font-size: 9px;
  font-weight: 600;
}

.when span {
  height: 24px;
  padding: 3px 6px;
  border: 1px solid;
  border-radius: 2px;
}

.when .time { margin-left: 2px; color: #2a75bd; }
.when .date { color: #50ae55; }

.more {
  margin-left: auto;
}

.more svg {
  fill: #333;
}

.close {
  position: absolute;
  right: 4px;
  top: 0;
}

.close svg {
  stroke: #666;
  stroke-width: 1.3;
}

.details {
  padding: 7px 15px 11px;
}

.cols {
  display: grid;
  grid-template-columns: 206px 1fr;
  margin-top: 5px;
  min-height: 48px;
}

.attach {
  display: block;
  margin-left: 14px;
}

.attach svg {
  display: block;
  fill: none;
  stroke: #333;
  stroke-width: 1.5;
}

.arrows {
  fill: none;
  stroke: #333;
}

.proof-icons {
  display: flex;
  gap: 12px;
  padding: 8px 1px 0;
}

.proof-icons button {
  position: relative;
}

.proof-icons svg {
  display: block;
}

.count {
  position: absolute;
  left: 12px;
  top: -8px;
  width: 14px;
  height: 14px;
  border-radius: 50%;
  background: #0f67ae;
  color: white;
  font-size: 8px;
  line-height: 14px;
}

.expand {
  position: absolute;
  right: 0;
  top: 0;
  width: 28px;
  height: 43px;
  background: #0e69b1;
  box-shadow: 0 2px 6px rgba(0, 0, 0, 0.3);
}

.expand svg {
  fill: none;
  stroke: white;
  stroke-width: 1.5;
}

.zoom {
  position: absolute;
  right: 9px;
  bottom: 261px;
  display: flex;
  flex-direction: column;
  width: 35px;
  padding: 0 4px;
  border-radius: 1px;
  background: white;
  box-shadow: 0 1px 3px rgba(0, 0, 0, 0.2);
}

.zoom button {
  height: 35px;
}

.zoom button + button {
  border-top: 1px solid #e4e4e4;
}

.zoom svg {
  display: block;
  margin: 0 auto;
  stroke: #666;
  stroke-width: 3.5;
}

.legal {
  position: absolute;
  right: 0;
  bottom: 0;
  display: flex;
  height: 12px;
  background: rgba(245, 245, 245, 0.7);
  color: #111;
  font-family: Roboto, sans-serif;
  font-size: 9px;
  line-height: 13px;
  white-space: nowrap;
}

.legal > * {
  padding: 0 5px;
  border-left: 1px solid #c4dcef;
}

.legal > :first-child {
  padding: 0 4px 0 2px;
}

.scale i {
  display: inline-block;
  width: 62px;
  height: 5px;
  border: 1px solid #555;
  border-top: none;
}

/* Route list */
.routes {
  padding: 6px 8px;
}

.filter {
  display: flex;
  align-items: center;
  gap: 8px;
  height: 22px;
  margin: 0 0 14px 2px;
  padding: 0 18px;
  border-radius: 11px;
  background: #eee;
  color: #666;
  font-size: 11px;
}

.filter svg {
  fill: none;
  stroke: #666;
}

.route {
  margin-bottom: 6px;
  border: 1px solid #e8e8e8;
  box-shadow: 0 0 10px rgba(0, 0, 0, 0.07);
}

.route header {
  display: flex;
  align-items: center;
  height: 38px;
  padding: 0 20px 0 14px;
  background: #eee;
}

.route header input[type="checkbox"] {
  width: 14px;
  height: 14px;
  background: #2491ee;
}

.aim {
  margin: 0 7px;
  fill: none;
  stroke: #222;
  stroke-width: 1.6;
}

.dot {
  width: 18px;
  height: 18px;
  margin-right: 7px;
  border: 1px solid #777;
  border-radius: 50%;
}

.teal { background: #4fcdb0; }
.violet { background: #7e4fcd; }

.route label {
  line-height: 13px;
}

.route label b {
  font-size: 10px;
}

.status {
  margin-left: 7px;
  padding: 0 4px;
  font-size: 9px;
  font-weight: 600;
  line-height: 17px;
}

.waiting { background: #f0e9da; color: #fcc04a; }
.running { background: #dfe7f1; color: #4b94e6; }

.progress {
  position: relative;
  width: 104px;
  height: 14px;
  margin-left: auto;
  border-radius: 1px;
  background: #b9bdc0;
  color: white;
  font-size: 10px;
  line-height: 14px;
}

.progress div {
  height: 100%;
  background: repeating-linear-gradient(45deg, #4caf50 0 6px, #70bf73 6px 12px);
}

.progress span {
  position: absolute;
  left: 33px;
  top: 0;
}

.progress + .more {
  margin-left: 21px;
}

.figures {
  display: grid;
  grid-template-columns: repeat(7, 1fr);
  align-items: center;
  height: 37px;
  color: #555;
  font-size: 9px;
  line-height: 13px;
}

.figures > span {
  display: flex;
  align-items: center;
  justify-content: center;
  gap: 2px;
}

.figures > .spaced {
  gap: 6px;
}

.figures .icon {
  width: 14px;
  height: 14px;
  stroke-width: 1;
}

.figures .road {
  width: 18px;
}

.figures.four {
  grid-template-columns: repeat(4, 1fr);
  height: 46px;
}

.figures .late {
  border-radius: 3px;
  background: #edf6ff;
  color: #3d94ec;
}

.chat {
  position: absolute;
  right: 15px;
  bottom: 14px;
  width: 52px;
  height: 52px;
  border-radius: 50%;
  background: #0d57fb;
  box-shadow: 0 2px 8px rgba(0, 0, 0, 0.3);
}

.chat svg {
  display: block;
  margin: 0 auto;
}

.chat span {
  position: absolute;
  right: -1px;
  top: 2px;
  width: 13px;
  height: 13px;
  border-radius: 50%;
  background: #ee4f74;
  color: white;
  font-size: 9px;
  line-height: 13px;
}
```
